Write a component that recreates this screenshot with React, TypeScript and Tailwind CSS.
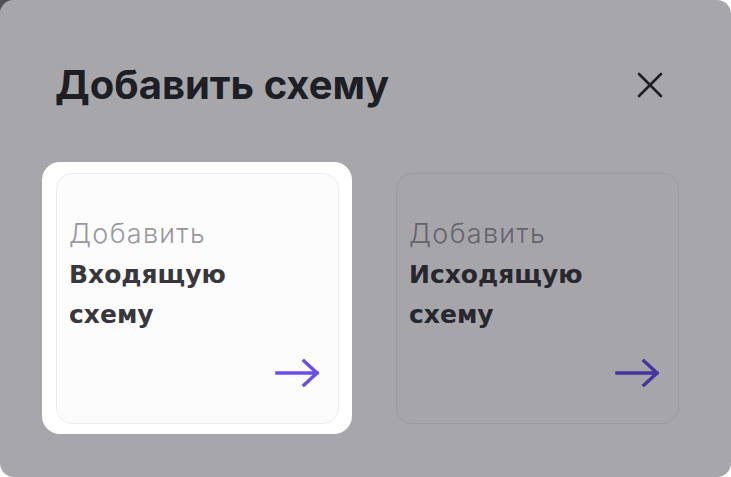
import React from "react";

interface SchemeCardProps {
  title: string;
}

const ArrowRight: React.FC = () => (
  <svg width="46" height="28" viewBox="0 0 46 28" fill="none">
    <path
      d="M2 14H42M29 2L42 14L29 26"
      stroke="#6a4cf0"
      strokeWidth="3.5"
      strokeLinecap="square"
    />
  </svg>
);

const SchemeCard: React.FC<SchemeCardProps> = ({ title }) => (
  <div className="flex h-[251px] w-[283px] flex-col rounded-[16px] border border-[#ececef] bg-[#fcfcfd] pl-[12px] pr-[17px] pb-[36px] pt-[41px]">
    <div className="text-[27px] font-light leading-[38px] tracking-[1.3px] text-[#98989d]">Добавить</div>
    <div className="mt-[2px] whitespace-pre-line font-['DejaVu_Sans',sans-serif] text-[25px] font-bold leading-[40px] text-[#38383c]">
      {title}
    </div>
    <div className="mt-auto flex justify-end">
      <ArrowRight />
    </div>
  </div>
);

const App: React.FC = () => {
  return (
    <div className="h-[477px] w-[731px] bg-[linear-gradient(135deg,#505156_0,#505156_10px,#ffffff_10px)] font-['Inter',sans-serif]">
      <div className="relative h-full w-full overflow-hidden rounded-[14px] bg-white">
        {/* Header */}
        <div className="flex items-center justify-between pl-[55px] pr-[68px] pt-[58px]">
          <h2 className="text-[40px] font-bold leading-[54px] text-[#2b2b30]">
            Добавить схему
          </h2>
          <button className="flex h-[26px] w-[26px] items-center justify-center">
            <svg width="26" height="26" viewBox="0 0 26 26" fill="none">
              <path d="M2 2L24 24M24 2L2 24" stroke="#2b2b30" strokeWidth="2.6" strokeLinecap="round" />
            </svg>
          </button>
        </div>

        {/* Cards */}
        <div className="mt-[50px] flex items-start pl-[42px]">
          <div className="relative z-10 rounded-[18px] bg-white pb-[10px] pl-[14px] pr-[13px] pt-[11px] shadow-[0_0_0_2000px_rgba(8,8,20,0.355)]">
            <SchemeCard title={"Входящую\nсхему"} />
          </div>
          <div className="ml-[44px] mt-[11px]">
            <SchemeCard title={"Исходящую\nсхему"} />
          </div>
        </div>
      </div>
    </div>
  );
};

export default App;
